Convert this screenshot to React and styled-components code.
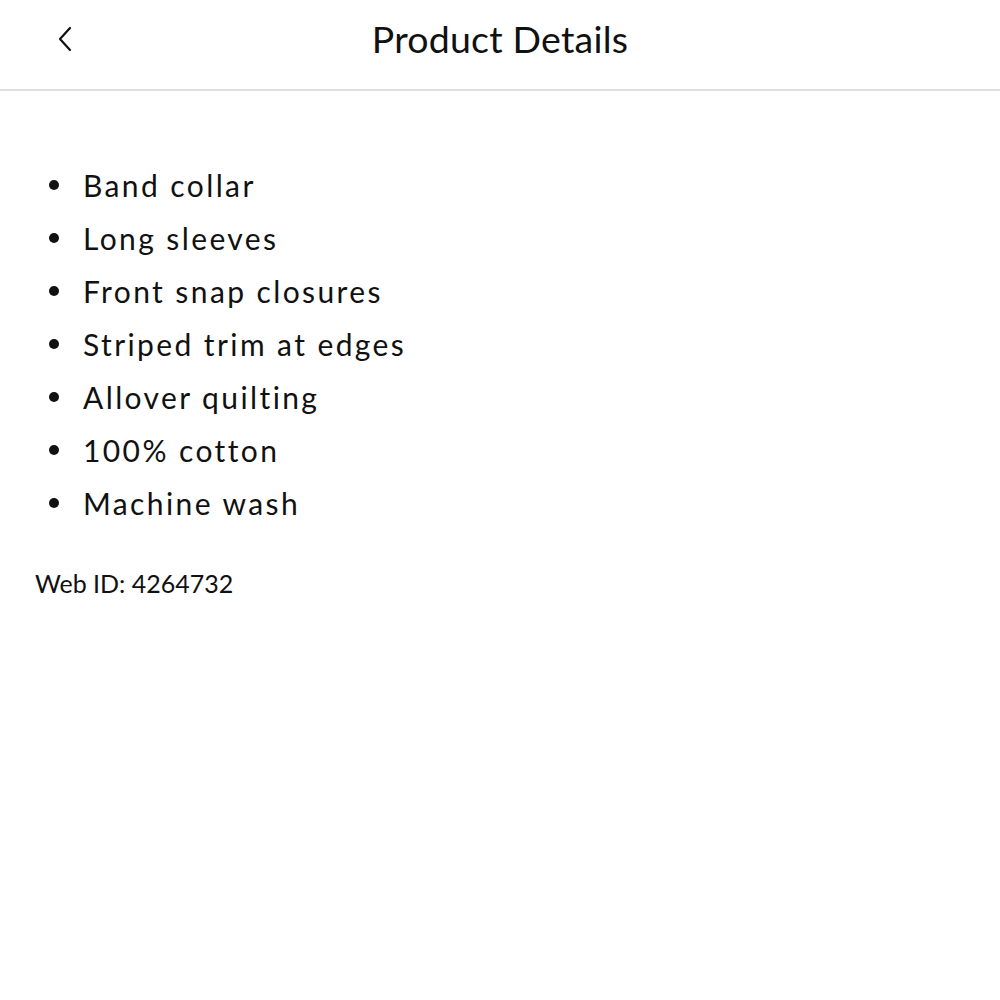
import React from 'react';
import styled, { createGlobalStyle } from 'styled-components';

const GlobalStyle = createGlobalStyle`
  body {
    margin: 0;
    background: #fff;
    font-family: Lato, "Noto Sans", sans-serif;
    color: #111;
  }
`;

const Page = styled.div`
  width: 1000px;
  min-height: 1000px;
  background: #fff;
`;

const Header = styled.header`
  position: relative;
  height: 89px;
  display: flex;
  align-items: center;
  justify-content: center;
  border-bottom: 2px solid #dedede;
`;

const BackButton = styled.button`
  position: absolute;
  left: 50px;
  top: 22px;
  width: 30px;
  height: 34px;
  padding: 0;
  border: none;
  background: none;
  display: flex;
  align-items: center;
  justify-content: center;
  cursor: pointer;
`;

const Title = styled.h1`
  margin: 0 0 12px;
  font-size: 37.5px;
  font-weight: 400;
  color: #111;
  letter-spacing: 0.2px;
`;

const Content = styled.main`
  padding: 67px 35px 0;
`;

const List = styled.ul`
  list-style: none;
  margin: 0;
  padding: 0 0 0 14px;
  display: flex;
  flex-direction: column;
`;

const Item = styled.li`
  display: flex;
  align-items: center;
  height: 53px;
  font-size: 30px;
  letter-spacing: 2.4px;
  color: #111;

  &::before {
    content: '';
    width: 10px;
    height: 10px;
    border-radius: 50%;
    background: #111;
    margin-right: 24px;
    flex-shrink: 0;
  }
`;

const WebId = styled.p`
  margin: 39px 0 0;
  font-size: 25px;
  color: #111;
`;

const features = [
  'Band collar',
  'Long sleeves',
  'Front snap closures',
  'Striped trim at edges',
  'Allover quilting',
  '100% cotton',
  'Machine wash',
];

const App = () => {
  return (
    <Page>
      <GlobalStyle />
      <Header>
        <BackButton aria-label="Back">
          <svg width="16" height="26" viewBox="0 0 16 26" fill="none">
            <path d="M13 2 L3 13 L13 24" stroke="#111" strokeWidth="2.2" strokeLinecap="round" strokeLinejoin="round" />
          </svg>
        </BackButton>
        <Title>Product Details</Title>
      </Header>
      <Content>
        <List>
          {features.map((f) => (
            <Item key={f}>{f}</Item>
          ))}
        </List>
        <WebId>Web ID: 4264732</WebId>
      </Content>
    </Page>
  );
};

export default App;
